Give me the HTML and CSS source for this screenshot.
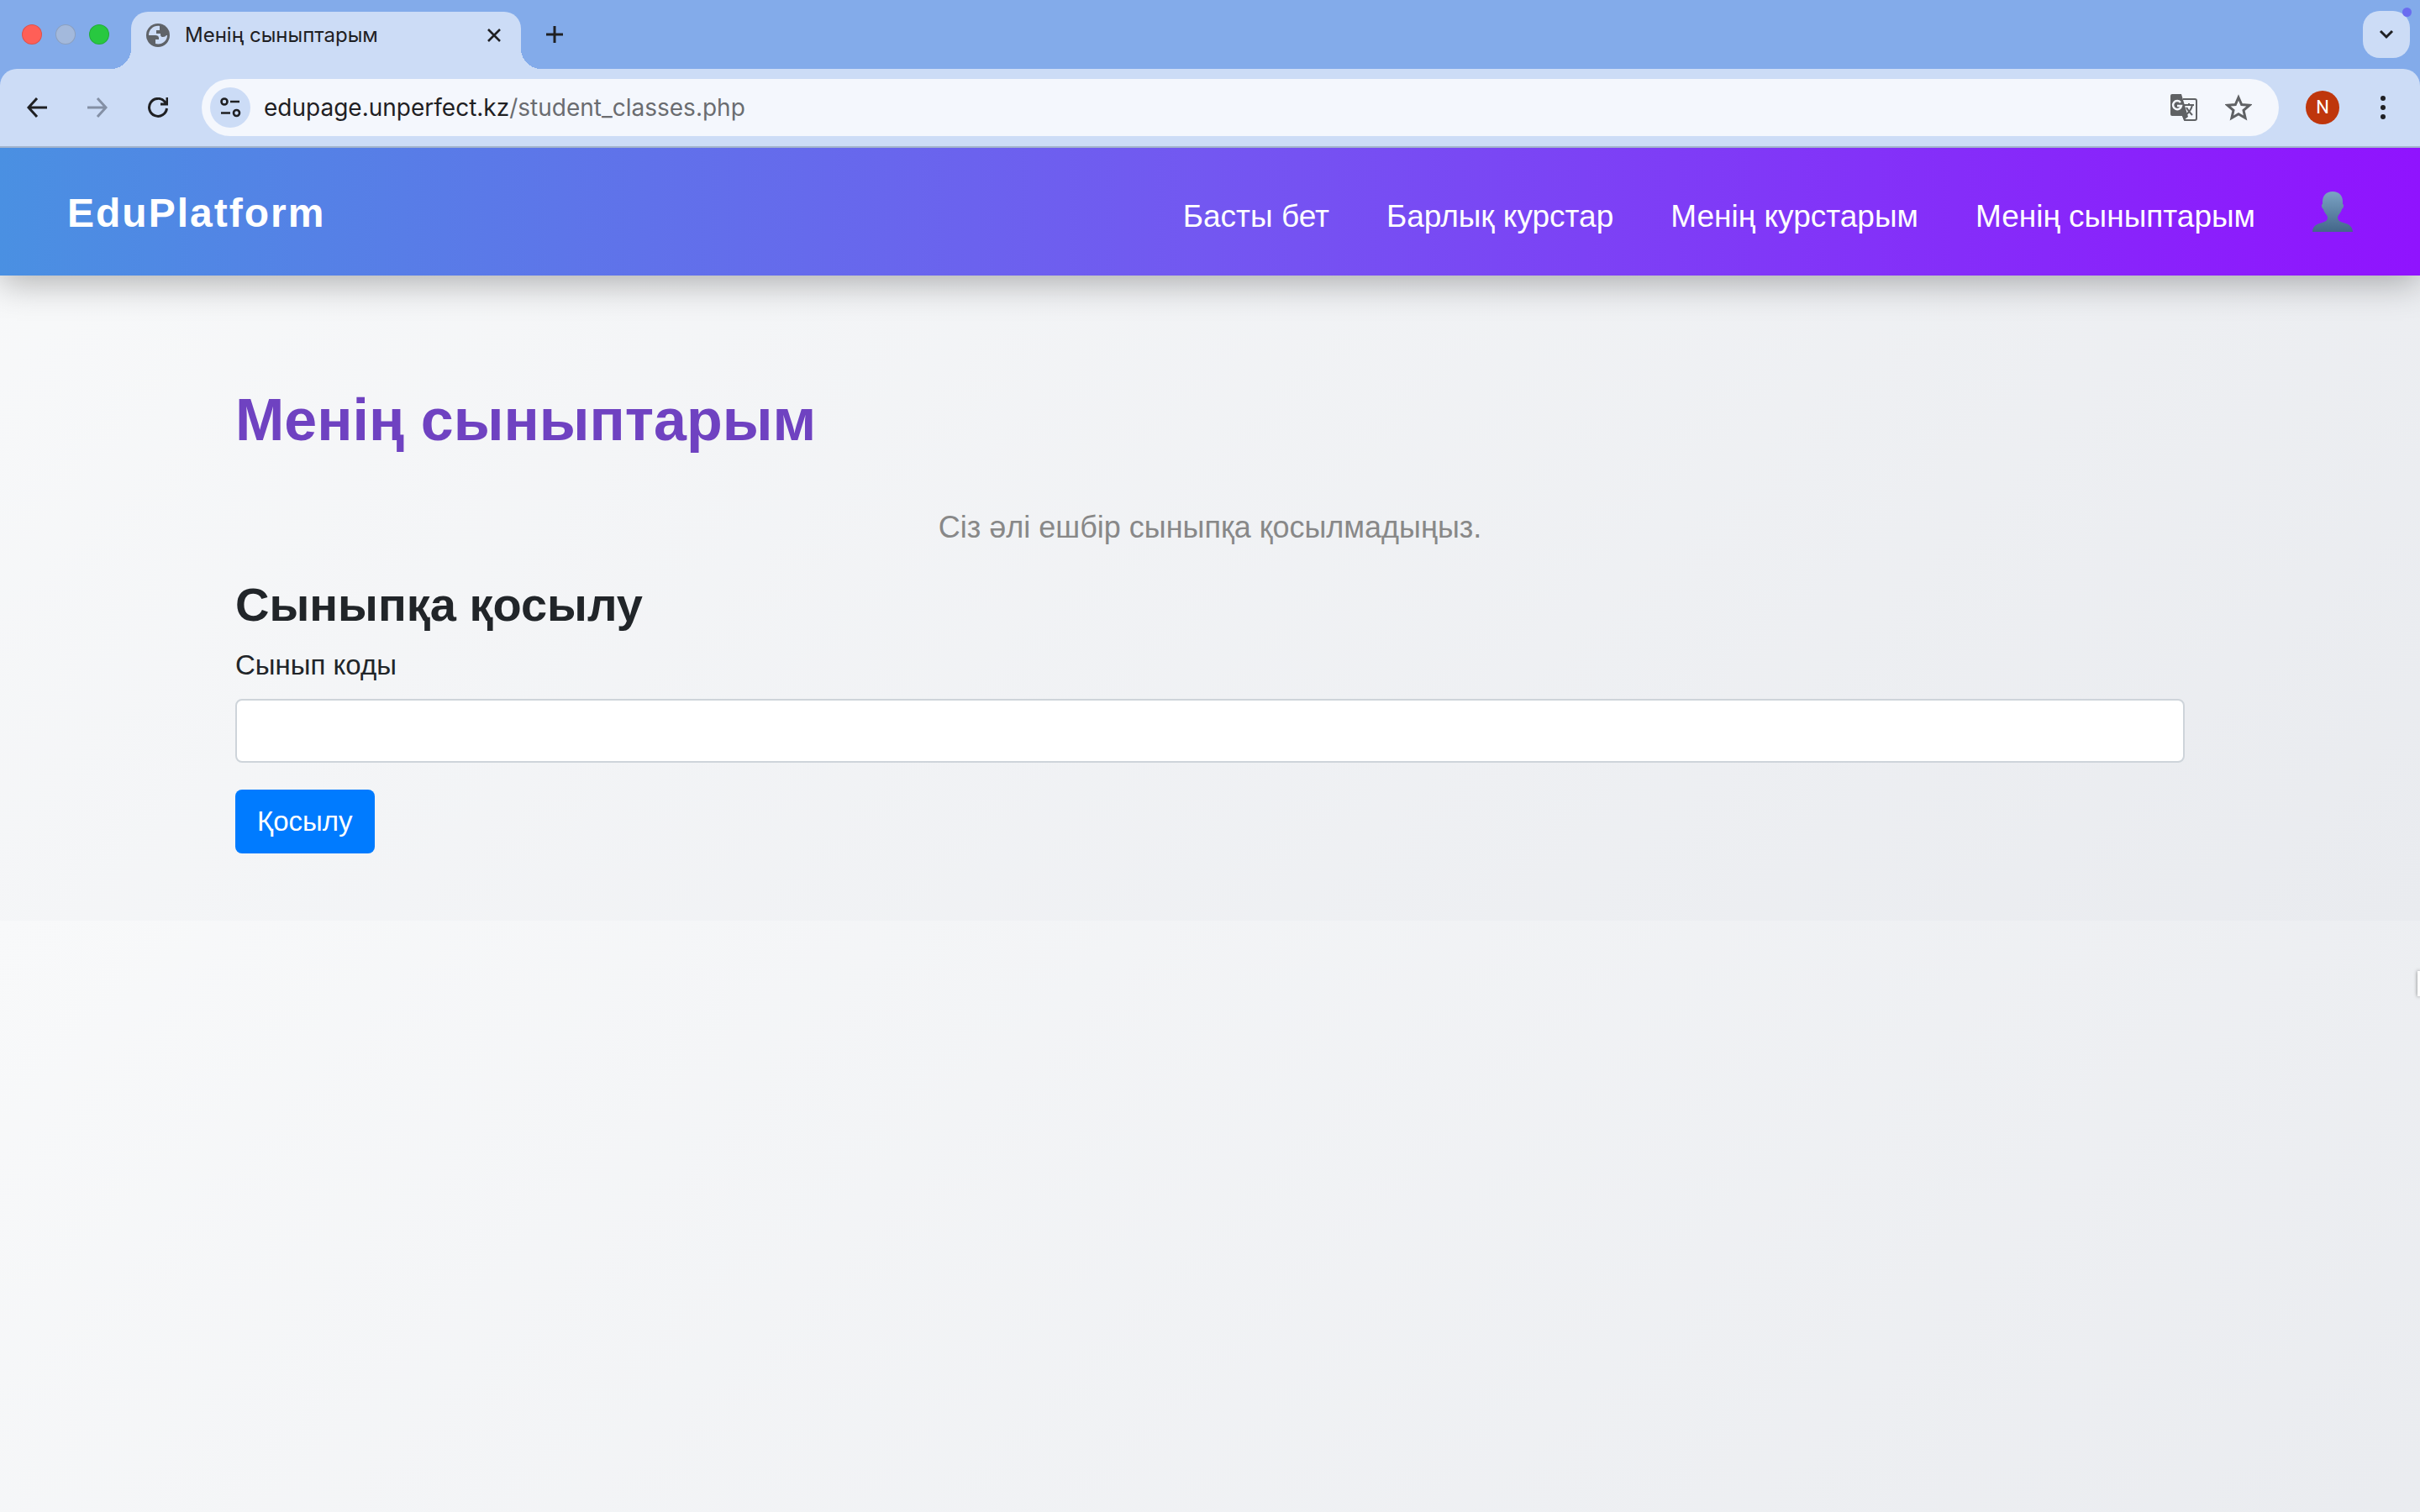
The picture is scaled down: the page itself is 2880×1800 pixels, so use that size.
FILE: index.html
```html
<!DOCTYPE html>
<html lang="kk">
<head>
<meta charset="utf-8">
<title>Менің сыныптарым</title>
<link rel="stylesheet" href="styles.css">
</head>
<body>
<div class="browser">
  <div class="tabstrip">
    <div class="lights">
      <span class="light light-close"></span>
      <span class="light light-min"></span>
      <span class="light light-max"></span>
    </div>
    <div class="tab">
      <svg class="favicon" viewBox="0 0 28 28"><circle cx="14" cy="14" r="14" fill="#5f6368"/><path d="M16 3C9 2 3 7 3 14h8c2 0 4 1 4 3v2h-4v5c7 2 14-3 14-10h-1c-1 1-2 2-4 2-3 0-3-2-3-4h-5V8h4V5z" fill="#ccdcf6"/></svg>
      <span class="tab-title">Менің сыныптарым</span>
      <button class="icon-btn tab-close" aria-label="Close tab"><svg width="16" height="16" viewBox="0 0 16 16"><path d="M1 1l14 14M15 1L1 15" stroke="#1f2023" stroke-width="2.600" fill="none"/></svg></button>
    </div>
    <button class="icon-btn new-tab" aria-label="New tab"><svg width="20" height="20" viewBox="0 0 20 20"><path d="M10 0v20M0 10h20" stroke="#1f2023" stroke-width="3" fill="none"/></svg></button>
    <button class="icon-btn tab-search" aria-label="Search tabs"><svg width="18" height="12" viewBox="0 0 18 12"><path d="M2 2l7 7 7-7" stroke="#1f2023" stroke-width="3" fill="none"/></svg><span class="notice"></span></button>
  </div>
  <div class="toolbar">
    <div class="nav-buttons">
      <button class="icon-btn" aria-label="Back"><svg width="24" height="24" viewBox="0 0 24 24"><path d="M12 1L2 12l10 11M2 12h22" stroke="#1f2023" stroke-width="3" fill="none"/></svg></button>
      <button class="icon-btn" aria-label="Forward"><svg width="24" height="24" viewBox="0 0 24 24"><path d="M12 1l10 11-10 11M22 12H0" stroke="#8490a5" stroke-width="3" fill="none"/></svg></button>
      <button class="icon-btn" aria-label="Reload"><svg width="24" height="24" viewBox="0 0 24 24"><path d="M22.500 13A10.500 10.500 0 1 1 20 5l3 3M23 0v8h-8" stroke="#1f2023" stroke-width="3" fill="none"/></svg></button>
    </div>
    <div class="omnibox">
      <button class="icon-btn site-info" aria-label="Site information"><svg width="26" height="24" viewBox="0 0 26 24"><g stroke="#1f2023" stroke-width="2.600" fill="none"><circle cx="6" cy="5" r="3.500"/><path d="M13 5h11M2 18.500h11"/><circle cx="20.500" cy="18.500" r="3.500"/></g></svg></button>
      <div class="url">edupage.unperfect.kz<span class="url-path">/student_classes.php</span></div>
      <button class="icon-btn" aria-label="Translate"><svg width="34" height="34" viewBox="0 0 34 34"><path d="M16 7h14a2 2 0 0 1 2 2v21a2 2 0 0 1-2 2H18l-3-8" fill="none" stroke="#5f6164" stroke-width="2"/><path d="M3 1h11l8 27-5 4-2-5H3a2 2 0 0 1-2-2V3a2 2 0 0 1 2-2z" fill="#5f6164"/><path d="M13 11a5 5 0 1 0 1 4h-5" fill="none" stroke="#f4f7fd" stroke-width="2.500"/><path d="M17 14h12M23 12v2M27 14c-1 5-4 9-8 12M20 17c2 4 4 6 7 9" fill="none" stroke="#5f6164" stroke-width="2"/></svg></button>
      <button class="icon-btn" aria-label="Bookmark"><svg width="32" height="32" viewBox="0 0 32 32"><path d="M16 4l3.700 8.500 9.300.8-7 6.100 2.100 9.100-8.100-4.800-8.100 4.800L10 19.400l-7-6.100 9.300-.8z" stroke="#5f6164" stroke-width="3" fill="none"/></svg></button>
    </div>
    <button class="avatar" aria-label="Profile">N</button>
    <button class="icon-btn menu" aria-label="Menu"><svg width="8" height="28" viewBox="0 0 8 28"><g fill="#1f2023"><circle cx="4" cy="3" r="3"/><circle cx="4" cy="14" r="3"/><circle cx="4" cy="25" r="3"/></g></svg></button>
  </div>
</div>
<div class="page">
  <header class="site-header">
    <a class="brand" href="#">EduPlatform</a>
    <nav class="site-nav">
      <a href="#">Басты бет</a>
      <a href="#">Барлық курстар</a>
      <a href="#">Менің курстарым</a>
      <a href="#">Менің сыныптарым</a>
      <a class="profile" href="#" aria-label="Профиль"><svg width="48" height="48" viewBox="0 0 48 48"><defs><linearGradient id="bust" x1="0" y1="0" x2="0" y2="1"><stop offset="0" stop-color="#7ba3c4"/><stop offset="1" stop-color="#436689"/></linearGradient></defs><path d="M24 0c8 0 12 5 12 12v3c2 0 1 5-1 6-1 5-5 7-5 10 0 9 17 3 18 17H0C1 34 18 40 18 31c0-3-4-5-5-10-2-1-3-6-1-6v-3C12 5 16 0 24 0z" fill="url(#bust)"/></svg></a>
    </nav>
  </header>
  <main class="content">
    <h1>Менің сыныптарым</h1>
    <p class="empty">Сіз әлі ешбір сыныпқа қосылмадыңыз.</p>
    <h3>Сыныпқа қосылу</h3>
    <form class="join">
      <label for="code">Сынып коды</label>
      <input id="code" type="text">
      <button class="submit" type="button">Қосылу</button>
    </form>
  </main>
  <span class="edge-handle"></span>
</div>
</body>
</html>
```
FILE: styles.css
```css
* { box-sizing: border-box; }

body {
  margin: 0;
  min-height: 100vh;
  display: flex;
  flex-direction: column;
  font-family: "Liberation Sans", Arial, sans-serif;
  font-size: 33px;
  line-height: 48px;
  color: #212529;
}

button { font: inherit; border: 0; padding: 0; }

.icon-btn {
  display: flex;
  align-items: center;
  justify-content: center;
  background: none;
  flex: none;
}

/* Browser chrome */
.browser { font-family: Inter, sans-serif; color: #1f2023; background: #83abea; }

.tabstrip {
  display: flex;
  align-items: center;
  height: 82px;
  padding: 0 12px 0 26px;
}

.lights { display: flex; gap: 16px; margin-right: 26px; }
.light { width: 24px; height: 24px; border-radius: 50%; border: 1px solid #0002; }
.light-close { background: #ff5f57; }
.light-min { background: #a3b9dc; }
.light-max { background: #28c840; }

.tab {
  position: relative;
  align-self: flex-end;
  display: flex;
  align-items: center;
  width: 464px;
  height: 68px;
  padding: 0 24px 12px 18px;
  background: #ccdcf6;
  border-radius: 20px 20px 0 0;
}
.tab::before, .tab::after {
  content: "";
  position: absolute;
  bottom: 0;
  width: 24px;
  height: 24px;
}
.tab::before { right: 100%; background: radial-gradient(circle at 0 0, transparent 24px, #ccdcf6 24px); }
.tab::after { left: 100%; background: radial-gradient(circle at 100% 0, transparent 24px, #ccdcf6 24px); }
.favicon { width: 28px; height: 28px; margin-right: 18px; }
.tab-title { flex: 1; font-size: 24px; line-height: 32px; }
.new-tab { margin-left: 30px; }
.tab-search {
  position: relative;
  width: 56px;
  height: 56px;
  margin-left: auto;
  border-radius: 20px;
  background: #ccdcf6;
}
.notice {
  position: absolute;
  top: -4px;
  right: -2px;
  width: 11px;
  height: 11px;
  border-radius: 50%;
  background: #6a6cf0;
}

.toolbar {
  display: flex;
  align-items: center;
  height: 94px;
  padding: 0 40px 0 32px;
  background: #ccdcf6;
  border-radius: 20px 20px 0 0;
  border-bottom: 2px solid #a3b4cc;
}
.nav-buttons { display: flex; gap: 48px; margin-right: 40px; }
.omnibox {
  flex: 1;
  display: flex;
  align-items: center;
  gap: 32px;
  height: 68px;
  padding: 0 32px 0 10px;
  border-radius: 34px;
  background: #f4f7fd;
}
.site-info { width: 48px; height: 48px; border-radius: 50%; background: #ccdcf6; }
.url { flex: 1; margin-left: -16px; font-size: 28px; line-height: 40px; }
.url-path { color: #6a6c70; }
.avatar {
  width: 40px;
  height: 40px;
  margin: 0 48px 0 32px;
  border-radius: 50%;
  background: #bf360c;
  color: #fff;
  font-family: Roboto, sans-serif;
  font-size: 22px;
  line-height: 40px;
}

/* Page */
.page {
  position: relative;
  flex: 1;
  overflow: hidden;
  background: linear-gradient(135deg, #f8f9fa, #e9ebef) 0 0 / 100% 920px;
}
.site-header {
  display: flex;
  align-items: center;
  justify-content: space-between;
  height: 152px;
  padding: 4px 80px 0;
  background: linear-gradient(90deg, #4a90e2, #7357f1, #9013fe);
  box-shadow: 0 8px 40px rgba(0, 0, 0, .3);
}
.site-header a { color: #fff; text-decoration: none; }
.brand { font-size: 48px; font-weight: 700; letter-spacing: 2px; }
.site-nav { display: flex; align-items: center; gap: 68px; font-size: 37px; padding-top: 8px; }
.profile { display: flex; padding-bottom: 12px; }

.content { padding: 128px 280px 80px; }
h1, h3, p { margin: 0; }
h1 { font-size: 70px; line-height: 88px; color: #6f42c1; margin-bottom: 56px; }
.empty { font-size: 36px; line-height: 56px; text-align: center; color: #888; margin-bottom: 30px; }
h3 { font-size: 56px; line-height: 68px; margin-bottom: 14px; }
.join { display: flex; flex-direction: column; align-items: flex-start; }
.join label { margin-bottom: 16px; }
.join input {
  width: 100%;
  height: 76px;
  padding: 12px 24px;
  font: inherit;
  border: 2px solid #ced4da;
  border-radius: 8px;
  background: #fff;
  margin-bottom: 32px;
}
.submit {
  height: 76px;
  padding: 0 26px;
  border-radius: 8px;
  background: #007bff;
  color: #fff;
}
.edge-handle {
  position: absolute;
  right: 0;
  top: 980px;
  width: 3px;
  height: 30px;
  background: #fff;
  box-shadow: 0 0 4px #0008;
}
```
